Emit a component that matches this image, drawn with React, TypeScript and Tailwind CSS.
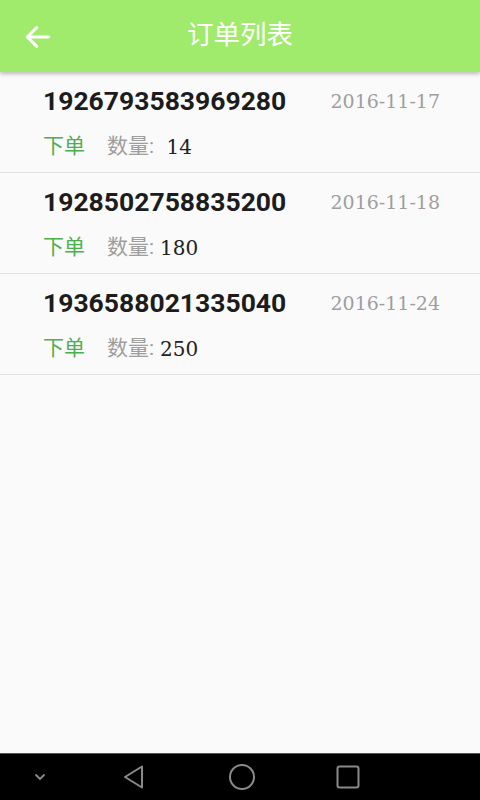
import React from 'react'

interface Order {
  id: string;
  date: string;
  qty: string;
}

// first row's qty has an extra space in the source data
const orders: Order[] = [
  { id: '1926793583969280', date: '2016-11-17', qty: '\u00a014' },
  { id: '1928502758835200', date: '2016-11-18', qty: '180' },
  { id: '1936588021335040', date: '2016-11-24', qty: '250' },
]

const cjk = { fontFamily: 'Roboto, "Noto Sans CJK SC", sans-serif' }
const serif = { fontFamily: '"DejaVu Serif", serif' }

const OrderRow: React.FC<{ order: Order }> = ({ order }) => {
  return (
    <div className="h-[101px] border-b-[1.5px] border-[#e0e0e0] pl-[43px] pr-[40px] pt-[13px]">
      <div className="flex h-[32px] items-center justify-between">
        <span className="text-[26.5px] font-bold text-[#1c1c1c]" style={cjk}>{order.id}</span>
        <span className="text-[19px] text-[#9e9e9e]" style={serif}>{order.date}</span>
      </div>
      <div className="mt-[16px] flex h-[28px] items-center">
        <span className="text-[21px] text-[#4caf50]" style={cjk}>下单</span>
        <span className="ml-[22px] text-[21px] text-[#9e9e9e]" style={cjk}>数量:</span>
        <span className="ml-[6px] whitespace-pre text-[20px] text-[#222]" style={serif}>{order.qty}</span>
      </div>
    </div>
  )
}

export default function App() {
  return (
    <div className="flex h-[800px] w-[480px] flex-col bg-[#fafafa]">
      <div className="relative z-10 flex h-[72px] shrink-0 items-center bg-[#a0eb6b] shadow-[0_2px_4px_rgba(0,0,0,0.25)]">
        <svg className="ml-[22px] mt-[1px]" width="32" height="32" viewBox="0 0 24 24" fill="none" stroke="white" strokeWidth="2.3" strokeLinecap="round" strokeLinejoin="round">
          <path d="M20 12H4.5" />
          <path d="M11 5l-7 7 7 7" />
        </svg>
        <span className="absolute left-1/2 top-[35px] -translate-x-1/2 -translate-y-1/2 text-[26.5px] text-white" style={cjk}>订单列表</span>
      </div>
      <div className="flex-1">
        {orders.map((o) => (
          <OrderRow key={o.id} order={o} />
        ))}
      </div>
      <div className="flex h-[47px] shrink-0 items-center border-t border-[#555] bg-black">
        <svg className="ml-[33px]" width="14" height="10" viewBox="0 0 14 10" fill="none" stroke="#8a8a8a" strokeWidth="1.8" strokeLinecap="round">
          <path d="M3 3l4 4 4-4" />
        </svg>
        <svg className="ml-[75px]" width="24" height="26" viewBox="0 0 24 26" fill="none" stroke="#8a8a8a" strokeWidth="2" strokeLinejoin="round">
          <path d="M20 2.5v21L3 13z" />
        </svg>
        <svg className="ml-[82px]" width="28" height="28" viewBox="0 0 28 28" fill="none" stroke="#8a8a8a" strokeWidth="2">
          <circle cx="14" cy="14" r="12" />
        </svg>
        <svg className="ml-[80px]" width="24" height="24" viewBox="0 0 24 24" fill="none" stroke="#8a8a8a" strokeWidth="2">
          <rect x="1.5" y="1.5" width="21" height="21" rx="2" />
        </svg>
      </div>
    </div>
  )
}
